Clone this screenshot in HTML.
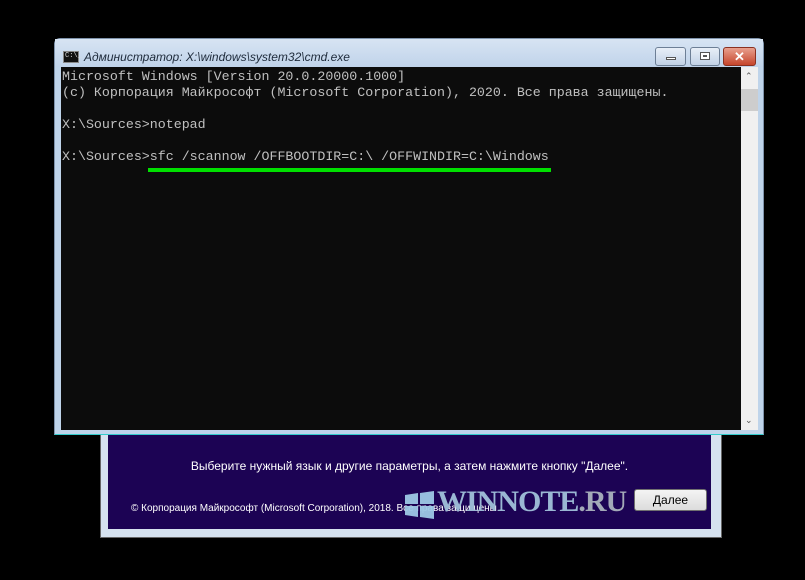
<!DOCTYPE html>
<html><head><meta charset="utf-8"><style>
*{margin:0;padding:0;box-sizing:border-box}
body{width:805px;height:580px;background:#000;position:relative;overflow:hidden;font-family:"Liberation Sans",sans-serif}
.win{position:absolute;left:54px;top:38px;width:710px;height:397px;background:#bfd4ea;border:1px solid #7f93ab;border-radius:6px 6px 0 0;border-bottom-color:#3cc}
.title{position:absolute;left:0;top:0;right:0;height:28px;background:linear-gradient(#d7e4f3,#c0d3ea)}
.ttext{position:absolute;left:29px;top:11px;font-size:12px;font-style:italic;color:#1e2a3a;white-space:nowrap}
.ico{position:absolute;left:8px;top:12px;width:16px;height:12px;background:#111;border:1px solid #888;color:#ddd;font:7px "Liberation Mono",monospace;line-height:9px;padding-left:1px}
.btn{position:absolute;top:8px;height:19px;border:1px solid #6d7f96;border-radius:3px;background:linear-gradient(#e8eff8,#c2d2e6)}
.con{position:absolute;left:6px;top:28px;width:680px;height:363px;background:#0c0c0c}
.con pre{position:absolute;left:1px;top:2px;font:13.3px/16px "Liberation Mono","DejaVu Sans Mono",monospace;color:#c0c0c0}
.sb{position:absolute;left:686px;top:28px;width:17px;height:363px;background:#f0f0f0}
.dlg{position:absolute;left:100px;top:435px;width:622px;height:103px;background:#d6e2ef;border:1px solid #666;border-top:none}
.pur{position:absolute;left:7px;top:0;width:603px;height:94px;background:#1c0354}
</style></head><body>
<div class="dlg"><div class="pur">
<div style="position:absolute;left:0;right:0;top:24px;text-align:center;color:#fff;font-size:12px">Выберите нужный язык и другие параметры, а затем нажмите кнопку "Далее".</div>
<div style="position:absolute;left:23px;top:68px;color:#fff;font-size:10px;white-space:nowrap">© Корпорация Майкрософт (Microsoft Corporation), 2018. Все права защищены.</div>
<svg style="position:absolute;left:297px;top:56px" width="29" height="28" viewBox="0 0 29 28"><g fill="#9ec9e6" opacity=".95"><polygon points="0,4 13,2 13,13 0,13"/><polygon points="15,2 29,0 29,13 15,13"/><polygon points="0,15 13,15 13,26 0,24"/><polygon points="15,15 29,15 29,28 15,26"/></g></svg>
<div style="position:absolute;left:329px;top:50px;font:bold 30px 'Liberation Serif',serif;color:#9ab7d3;white-space:nowrap;letter-spacing:-1px">WINNOTE<span style="color:#a3a9b8">.RU</span></div>
<div style="position:absolute;left:526px;top:54px;width:73px;height:22px;border:1px solid #707070;border-radius:3px;background:linear-gradient(#f4f4f4,#dcdcdc);font-size:12px;text-align:center;line-height:20px;color:#000"><u>Д</u>алее</div>
</div></div>
<div class="win">
<div class="title"><div class="ico">C:\_</div><div class="ttext">Администратор: X:\windows\system32\cmd.exe</div>
<div class="btn" style="left:600px;width:31px"><div style="position:absolute;left:10px;top:9px;width:10px;height:3px;background:#fff;border:1px solid #555"></div></div>
<div class="btn" style="left:635px;width:30px"><div style="position:absolute;left:9px;top:4px;width:10px;height:8px;background:#fff;border:1px solid #555;box-shadow:inset 0 0 0 2px #fff,inset 0 0 0 3px #555"></div></div>
<div class="btn" style="left:668px;width:33px;background:linear-gradient(#e8a08e,#c6452c);border-color:#8a3020;color:#fff;font:bold 13px 'Liberation Sans';text-align:center;line-height:17px">✕</div>
</div>
<div class="con"><pre>Microsoft Windows [Version 20.0.20000.1000]
(c) Корпорация Майкрософт (Microsoft Corporation), 2020. Все права защищены.

X:\Sources&gt;notepad

X:\Sources&gt;sfc /scannow /OFFBOOTDIR=C:\ /OFFWINDIR=C:\Windows</pre>
<div style="position:absolute;left:87px;top:101px;width:403px;height:4px;background:#00e000"></div></div>
<div class="sb"><div style="position:absolute;left:0;top:22px;width:17px;height:22px;background:#cdcdcd"></div>
<div style="position:absolute;left:4px;top:4px;font-size:9px;color:#555">⌃</div>
<div style="position:absolute;left:4px;bottom:4px;font-size:9px;color:#555">⌄</div></div>
</div>
</body></html>
